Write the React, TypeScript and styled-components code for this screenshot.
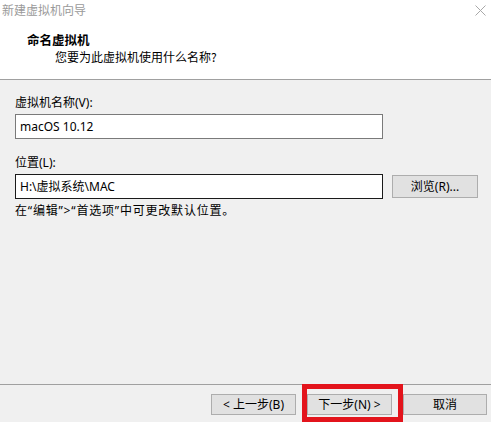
import React from "react";
import styled, { createGlobalStyle } from "styled-components";

const GlobalStyle = createGlobalStyle`
  html, body { margin: 0; padding: 0; }
  body {
    width: 491px;
    height: 422px;
    overflow: hidden;
    background: #f0f0f0;
    font-family: "Noto Sans", "Noto Sans CJK SC", sans-serif;
    font-size: 12px;
    color: #000;
  }
  * { box-sizing: border-box; }
`;

const Window = styled.div`
  width: 491px;
  height: 422px;
  display: flex;
  flex-direction: column;
  background: #f0f0f0;
`;

const Header = styled.div`
  height: 80px;
  background: #fff;
  border-bottom: 1px solid #a0a0a0;
  display: flex;
  flex-direction: column;
`;

const TitleBar = styled.div`
  height: 20px;
  display: flex;
  align-items: center;
  justify-content: space-between;
  padding: 0 5px 0 2px;
`;

const TitleText = styled.span`
  color: #9a9a9a;
  font-family: "Noto Sans CJK SC", sans-serif;
  font-size: 12px;
  line-height: 20px;
`;

const HeadingBlock = styled.div`
  padding: 12px 0 0 27px;
  display: flex;
  flex-direction: column;
`;

const Heading = styled.div`
  font-family: "Noto Sans CJK SC", sans-serif;
  font-weight: 700;
  font-size: 12.5px;
  line-height: 16px;
`;

const SubHeading = styled.div`
  font-family: "Noto Sans CJK SC", sans-serif;
  font-size: 12px;
  line-height: 16px;
  margin-top: 1px;
  padding-left: 28px;
`;

const Content = styled.div`
  flex: 1;
  padding: 15px 0 0 15px;
  display: flex;
  flex-direction: column;
`;

const Label = styled.div<{ $gap?: number }>`
  font-size: 12px;
  line-height: 16px;
  margin-top: ${(p) => p.$gap ?? 0}px;
`;

const Row = styled.div`
  display: flex;
  align-items: center;
  margin-top: 3px;
`;

const TextField = styled.input<{ $focused?: boolean }>`
  width: 368px;
  height: 25px;
  margin: 0;
  padding: 0 0 1px 4px;
  border: 1px solid ${(p) => (p.$focused ? "#1a1a1a" : "#7a7a7a")};
  background: #fff;
  font-family: "Noto Sans", "Noto Sans CJK SC", sans-serif;
  font-size: 12px;
  color: #000;
  outline: none;
`;

const Button = styled.button<{ $w?: number }>`
  width: ${(p) => p.$w ?? 85}px;
  height: 21px;
  margin: 0;
  padding: 0 0 1px;
  border: 1px solid #adadad;
  background: #e1e1e1;
  font-family: "Noto Sans", "Noto Sans CJK SC", sans-serif;
  font-size: 12px;
  color: #000;
  display: flex;
  align-items: center;
  justify-content: center;
`;

const BrowseButton = styled(Button)`
  height: 23px;
  margin-left: 9px;
`;

const Hint = styled.div`
  font-family: "Noto Sans", "Noto Sans CJK SC", sans-serif;
  font-size: 12px;
  line-height: 16px;
  letter-spacing: 0.8px;
  margin-top: 4px;
`;

const Footer = styled.div`
  position: relative;
  height: 38px;
  border-top: 1px solid #a0a0a0;
  padding: 9px 4px 0 0;
  display: flex;
  justify-content: flex-end;
  align-items: flex-start;
  gap: 11px;
`;

const Highlight = styled.div`
  position: absolute;
  left: 302px;
  top: -1px;
  width: 101px;
  height: 38px;
  border: 5px solid #e3141c;
  pointer-events: none;
`;

const CloseIcon = () => (
  <svg width="11" height="11" viewBox="0 0 11 11">
    <path d="M0.5 0.5 L10.5 10.5 M10.5 0.5 L0.5 10.5" stroke="#a8a8a8" strokeWidth="1" fill="none" />
  </svg>
);

export default function App() {
  return (
    <>
      <GlobalStyle />
      <Window>
        <Header>
          <TitleBar>
            <TitleText>新建虚拟机向导</TitleText>
            <CloseIcon />
          </TitleBar>
          <HeadingBlock>
            <Heading>命名虚拟机</Heading>
            <SubHeading>您要为此虚拟机使用什么名称?</SubHeading>
          </HeadingBlock>
        </Header>
        <Content>
          <Label>虚拟机名称(V):</Label>
          <Row>
            <TextField readOnly value="macOS 10.12" />
          </Row>
          <Label $gap={16}>位置(L):</Label>
          <Row>
            <TextField $focused readOnly value={"H:\\虚拟系统\\MAC"} />
            <BrowseButton $w={86}>浏览(R)...</BrowseButton>
          </Row>
          <Hint>在“编辑”&gt;“首选项”中可更改默认位置。</Hint>
        </Content>
        <Footer>
          <Button>&lt; 上一步(B)</Button>
          <Button>下一步(N) &gt;</Button>
          <Button $w={84}>取消</Button>
          <Highlight />
        </Footer>
      </Window>
    </>
  );
}
